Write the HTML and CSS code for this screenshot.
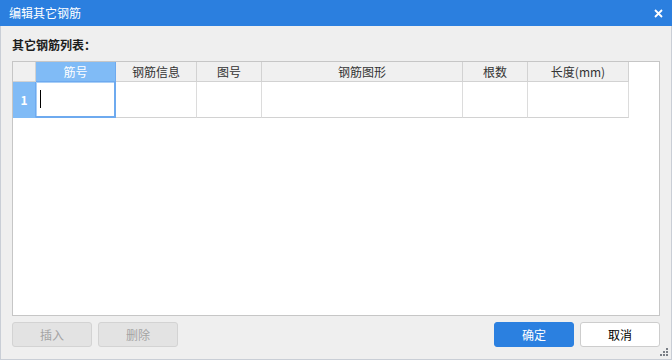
FILE: index.html
```html
<!DOCTYPE html>
<html lang="zh-CN">
<head>
<meta charset="utf-8">
<title>编辑其它钢筋</title>
<link rel="stylesheet" href="styles.css">
</head>
<body>
<div class="window">
  <div class="titlebar">
    <span class="title">编辑其它钢筋</span>
    <button class="close" aria-label="关闭">
      <svg width="9" height="9" viewBox="0 0 9 9"><path d="M1 1 L8 8 M8 1 L1 8" stroke="#fff" stroke-width="1.8" fill="none"/></svg>
    </button>
  </div>
  <div class="body">
    <div class="label">其它钢筋列表：</div>
    <div class="grid-box">
      <div class="grid">
        <div class="hcell corner"></div>
        <div class="hcell sel">筋号</div>
        <div class="hcell">钢筋信息</div>
        <div class="hcell">图号</div>
        <div class="hcell">钢筋图形</div>
        <div class="hcell">根数</div>
        <div class="hcell">长度(mm)</div>
        <div class="rowhead">1</div>
        <div class="cell active"><span class="caret"></span></div>
        <div class="cell"></div>
        <div class="cell"></div>
        <div class="cell"></div>
        <div class="cell"></div>
        <div class="cell"></div>
      </div>
    </div>
    <div class="actions">
      <div class="group">
        <button class="btn disabled" disabled>插入</button>
        <button class="btn disabled" disabled>删除</button>
      </div>
      <div class="group">
        <button class="btn primary">确定</button>
        <button class="btn">取消</button>
      </div>
    </div>
  </div>
  <svg class="grip" width="8" height="8" viewBox="0 0 8 8">
    <rect x="6" y="0" width="2" height="2" fill="#7a7f86"/>
    <rect x="3" y="3" width="2" height="2" fill="#7a7f86"/>
    <rect x="6" y="3" width="2" height="2" fill="#7a7f86"/>
    <rect x="0" y="6" width="2" height="2" fill="#7a7f86"/>
    <rect x="3" y="6" width="2" height="2" fill="#7a7f86"/>
    <rect x="6" y="6" width="2" height="2" fill="#7a7f86"/>
  </svg>
</div>
</body>
</html>
```
FILE: styles.css
```css
html, body {
  margin: 0;
  padding: 0;
}
body {
  width: 672px;
  height: 360px;
  overflow: hidden;
  font-family: "Noto Sans CJK SC", "Microsoft YaHei", "Noto Sans", sans-serif;
  font-size: 12px;
  color: #1a1a1a;
}
.window {
  position: relative;
  width: 672px;
  height: 360px;
  display: flex;
  flex-direction: column;
  background: #efefef;
}
.titlebar {
  flex: none;
  height: 26px;
  background: #2b7fdf;
  display: flex;
  align-items: center;
  justify-content: space-between;
  padding: 0 9px 0 9px;
  color: #fff;
}
.title {
  font-size: 12px;
  line-height: 26px;
}
.close {
  border: none;
  background: transparent;
  padding: 0;
  width: 10px;
  height: 10px;
  display: flex;
  align-items: center;
  justify-content: center;
  margin-top: 1px;
}
.body {
  flex: 1;
  display: flex;
  flex-direction: column;
  padding: 11px 11px 12px 11px;
  border: 1px solid #c9ced6;
  border-top: none;
  min-height: 0;
}
.label {
  height: 16px;
  line-height: 16px;
  font-weight: bold;
  color: #1c1c1c;
}
.grid-box {
  margin-top: 8px;
  flex: 1;
  background: #fff;
  border: 1px solid #c6c6c6;
}
.grid {
  display: grid;
  grid-template-columns: 23px 80px 81px 65px 201px 65px 101px;
  grid-template-rows: 20px 36px;
  width: 616px;
}
.hcell, .cell, .rowhead {
  box-sizing: border-box;
  border-right: 1px solid #d2d2d2;
  border-bottom: 1px solid #d2d2d2;
}
.hcell {
  background: #f0f0f0;
  color: #333;
  text-align: center;
  line-height: 19px;
  font-size: 12px;
}
.hcell.sel {
  background: #80bbf6;
  color: #fff;
  border-right-color: #6eaaef;
  border-bottom-color: #6eaaef;
}
.rowhead {
  background: #80bbf6;
  color: #fff;
  font-weight: bold;
  text-align: center;
  line-height: 35px;
  border-right-color: #6eaaef;
  border-bottom-color: #80bbf6;
}
.cell {
  background: #fff;
  border-right-color: #dcdcdc;
  border-bottom-color: #d2d2d2;
}
.cell.active {
  position: relative;
  border-right: 2px solid #6eaaef;
  border-bottom: 2px solid #6eaaef;
  box-shadow: inset 1px 1px 0 #a9cff7;
}
.caret {
  position: absolute;
  left: 4px;
  top: 8px;
  width: 1px;
  height: 18px;
  background: #000;
}
.actions {
  margin-top: 6px;
  display: flex;
  justify-content: space-between;
}
.group {
  display: flex;
  gap: 6px;
}
.btn {
  box-sizing: border-box;
  width: 80px;
  height: 25px;
  border-radius: 3px;
  border: 1px solid #cdcdcd;
  background: #fff;
  color: #000;
  font-family: inherit;
  font-size: 12px;
  padding: 0;
}
.btn.disabled {
  background: #e3e3e3;
  border-color: #d3d3d3;
  color: #a4a4a4;
}
.btn.primary {
  background: #2b80e0;
  border-color: #2b80e0;
  color: #fff;
}
.grip {
  position: absolute;
  right: 4px;
  bottom: 4px;
}
```
